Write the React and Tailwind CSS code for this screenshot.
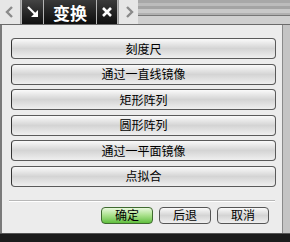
import { useState } from "react";

const items = ["刻度尺", "通过一直线镜像", "矩形阵列", "圆形阵列", "通过一平面镜像", "点拟合"];

const font = { fontFamily: '"Noto Sans CJK SC", "Liberation Sans", sans-serif' };

const App = () => {
  const [active, setActive] = useState(null);

  return (
    <div className="w-[290px] h-[242px] flex flex-col bg-[#b4b4b4] overflow-hidden" style={font}>
      {/* Tab bar */}
      <div className="h-[24px] flex shrink-0">
        <div className="w-[21px] h-[24px] bg-[#e6e6e6] border-r border-[#9a9a9a] flex items-center justify-center">
          <svg width="10" height="12" viewBox="0 0 10 12">
            <path d="M7 1 L2 6 L7 11" stroke="#8a8a8a" strokeWidth="2.4" fill="none" />
          </svg>
        </div>
        <div className="w-[21px] h-[24px] ml-[1px] bg-gradient-to-b from-[#444] to-[#111] flex items-center justify-center">
          <svg width="14" height="14" viewBox="0 0 14 14">
            <path d="M2 2 L10 10" stroke="#fff" strokeWidth="2.2" />
            <path d="M12 5 L12 12 L5 12 Z" fill="#fff" />
          </svg>
        </div>
        <div className="w-[52px] h-[24px] ml-[1px] bg-gradient-to-b from-[#3a3a3a] to-[#0e0e0e] flex items-center justify-center text-white font-bold text-[17px] leading-none">
          变换
        </div>
        <div className="w-[20px] h-[24px] ml-[1px] bg-gradient-to-b from-[#3a3a3a] to-[#111] flex items-center justify-center">
          <svg width="12" height="12" viewBox="0 0 12 12">
            <path d="M2 2 L10 10 M10 2 L2 10" stroke="#fff" strokeWidth="2.6" />
          </svg>
        </div>
        <div className="w-[20px] h-[24px] ml-[1px] bg-[#e6e6e6] border-l border-[#9a9a9a] flex items-center justify-center">
          <svg width="10" height="12" viewBox="0 0 10 12">
            <path d="M3 1 L8 6 L3 11" stroke="#8a8a8a" strokeWidth="2.4" fill="none" />
          </svg>
        </div>
        <div className="flex-1 flex flex-col">
          <div className="h-[3px] bg-[#a8a8a8]" />
          <div className="h-[3px] bg-[#bcbcbc]" />
          <div className="h-[3px] bg-[#a4a4a4]" />
          <div className="h-[4px] bg-[#c8c8c8]" />
          <div className="h-[2px] bg-[#b0b0b0]" />
          <div className="h-[1px] bg-[#777]" />
          <div className="flex-1 bg-[#cfcfcf]" />
        </div>
      </div>

      {/* Window body */}
      <div className="flex-1 flex border-t border-[#6a6a6a]">
        <div className="w-[2px] bg-[#7a7a7a]" />
        <div className="flex-1 bg-[#ececec] border-r border-[#8a8a8a] flex flex-col">
          <div className="flex flex-col gap-[4.6px] pl-[9px] pr-[5px] pt-[13px]">
            {items.map((t) => (
              <button
                key={t}
                onClick={() => setActive(t)}
                className={`h-[21px] w-[265px] rounded-[4px] border border-[#5a5a5a] border-l-[#333] text-[12px] text-black leading-none flex items-center justify-center bg-gradient-to-b from-[#fafafa] via-[#d4d4d4] to-[#efefef] ${active === t ? "brightness-95" : ""}`}
              >
                {t}
              </button>
            ))}
          </div>
          <div className="mt-[13px] mx-[7px] h-[2px] border-t border-[#b8b8b8] border-b border-b-white" />
          <div className="flex justify-end gap-[6px] pr-[13px] mt-[5px]">
            <button className="w-[52px] h-[17px] rounded-[4px] border border-[#3f6a30] text-[12px] leading-none text-black bg-gradient-to-b from-[#e8f8dc] via-[#a8e08a] to-[#5fbf3c]">
              确定
            </button>
            <button className="w-[52px] h-[17px] rounded-[4px] border border-[#555] text-[12px] leading-none text-black bg-gradient-to-b from-[#fafafa] via-[#d4d4d4] to-[#efefef]">
              后退
            </button>
            <button className="w-[52px] h-[17px] rounded-[4px] border border-[#555] text-[12px] leading-none text-black bg-gradient-to-b from-[#fafafa] via-[#d4d4d4] to-[#efefef]">
              取消
            </button>
          </div>
          <div className="flex-1" />
        </div>
        <div className="w-[7px] bg-[#c4c4c4]" />
      </div>
      <div className="h-[9px] bg-[#1b1b1b] border-t border-[#555] shrink-0" />
    </div>
  );
};

export default App;
